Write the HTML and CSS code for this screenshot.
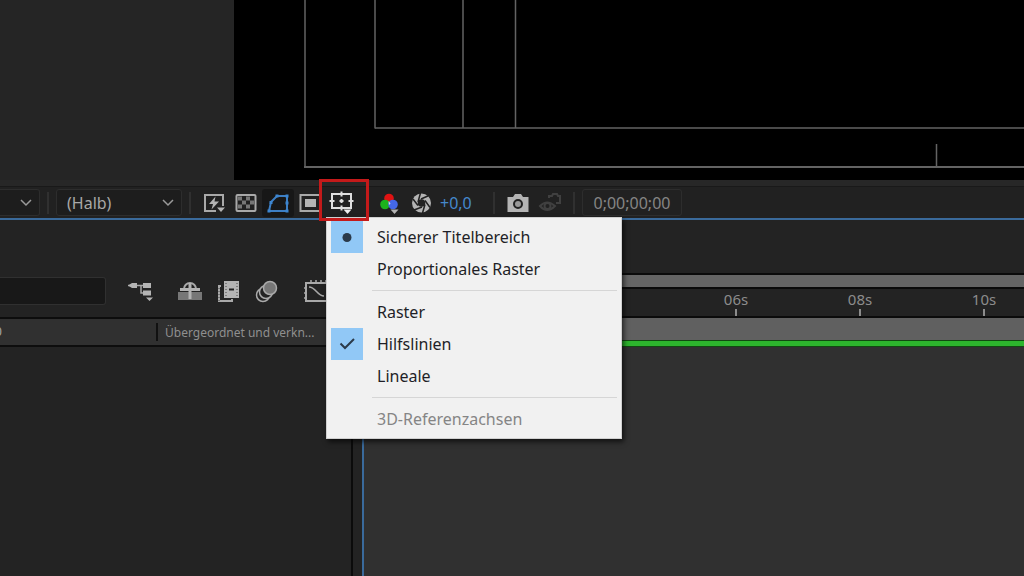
FILE: index.html
```html
<!DOCTYPE html>
<html lang="de">
<head>
<meta charset="utf-8">
<title>Komposition</title>
<link rel="stylesheet" href="styles.css">
</head>
<body>
<main class="app">
  <section class="viewer" aria-label="Kompositionsansicht">
    <div class="pasteboard"></div>
    <svg class="canvas" aria-hidden="true">
      <g class="guide">
        <path d="M71 0V167M141 0V128.500M229 0V128M281.500 0V128M702.500 144V167"/>
        <line x1="141" y1="128" x2="100%" y2="128"/>
        <line x1="70" y1="167" x2="100%" y2="167" stroke-width="2"/>
      </g>
    </svg>
  </section>

  <div class="toolbar" role="toolbar" aria-label="Ansichtsoptionen">
    <span class="select-wrap zoom"><select aria-label="Vergrößerung"><option></option></select>
      <svg class="chevron" width="12" height="8"><path d="M1 1l5 5 5-5"/></svg></span>
    <span class="sep"></span>
    <span class="select-wrap resolution"><select aria-label="Auflösung"><option>(Halb)</option></select>
      <svg class="chevron" width="12" height="8"><path d="M1 1l5 5 5-5"/></svg></span>
    <span class="sep"></span>
    <div class="group">
      <button class="tool" aria-label="Schnelle Vorschau"><svg width="24" height="24" viewBox="0 0 24 24"><path class="line" d="M14 20H3V4h18v11"/><path class="fill" d="M13.500 5.500L7 13h4l-1.500 5.500L17 10.500h-4.500zM15 16.500h8l-4 4.500z"/></svg></button>
      <button class="tool" aria-label="Transparenzraster"><svg width="24" height="24" viewBox="0 0 24 24"><rect x="2.500" y="4" width="19" height="16" rx="1" class="line"/><path class="check" d="M4 5.500h4v4H4zM12 5.500h4v4h-4zM8 9.500h4v4H8zM16 9.500h4v4h-4zM4 13.500h4v4H4zM12 13.500h4v4h-4z"/></svg></button>
      <button class="tool active" aria-label="Maske einblenden" aria-pressed="true"><svg width="24" height="24" viewBox="0 0 24 24"><path class="blue-line" d="M3 20l2-9 6-6h10v15z"/><path class="blue" d="M1.500 18.500h3v3h-3zM3.500 10h3v3h-3zM9.500 3.500h3v3h-3zM19.500 3.500h3v3h-3zM19.500 10.500h3v3h-3zM19.500 18.500h3v3h-3z"/></svg></button>
      <button class="tool" aria-label="Relevanter Bereich"><svg width="24" height="24" viewBox="0 0 24 24"><rect x="2.500" y="4" width="20" height="16" class="line"/><path class="fill" d="M7 8h11v8H7z"/></svg></button>
      <div class="menu-anchor">
        <button class="tool bright" aria-label="Raster- und Hilfslinienoptionen" aria-haspopup="menu" aria-expanded="true"><svg width="26" height="28" viewBox="0 0 26 28"><path class="line" d="M3 5h19v14H3zM12.500 2.500v5M12.500 10v4M12.500 16.500v5M.5 12h5M10.500 12h4M19.500 12h5"/><path class="fill" d="M14.500 20.500h8l-4 4.500z"/></svg></button>
        <div class="menu" role="menu">
          <button role="menuitemradio" aria-checked="true"><span class="mark on"><svg width="32" height="32"><circle cx="16" cy="16.500" r="4.500"/></svg></span>Sicherer Titelbereich</button>
          <button role="menuitemradio" aria-checked="false"><span class="mark"></span>Proportionales Raster</button>
          <hr>
          <button role="menuitemcheckbox" aria-checked="false"><span class="mark"></span>Raster</button>
          <button role="menuitemcheckbox" aria-checked="true"><span class="mark on"><svg width="32" height="32"><path d="M9.500 15.500l4.500 4.500 9-9"/></svg></span>Hilfslinien</button>
          <button role="menuitemcheckbox" aria-checked="false"><span class="mark"></span>Lineale</button>
          <hr>
          <button role="menuitemcheckbox" aria-checked="false" disabled><span class="mark"></span>3D-Referenzachsen</button>
        </div>
        <span class="highlight"></span>
      </div>
    </div>
    <div class="group channels">
      <button class="tool" aria-label="Kanäle"><svg width="24" height="24" viewBox="0 0 24 24"><circle cx="11" cy="7.500" r="4.800" fill="#e01212"/><circle cx="7" cy="13.500" r="4.800" fill="#1cb31c"/><circle cx="15" cy="13.500" r="4.800" fill="#4468e6"/><path d="M10.500 10l2 2.500-1.500 1.500z" fill="#ddd"/><path class="fill" d="M12.500 18.500h8L16.500 23z"/></svg></button>
      <button class="tool" aria-label="Belichtung zurücksetzen"><svg width="24" height="24" viewBox="0 0 24 24"><circle cx="11.500" cy="12" r="9.500" class="fill"/><circle cx="11.500" cy="12" r="3.800" fill="#212121"/><path class="blade" d="M8 11L10.500 2M11 8l8-3.500M15 9.500l5 7M15 13.500L12.500 22M12 16l-8 3M8 14.500L3 8"/></svg></button>
      <button class="exposure" aria-label="Belichtung">+0,0</button>
    </div>
    <span class="sep"></span>
    <div class="group">
      <button class="tool" aria-label="Schnappschuss"><svg width="24" height="24" viewBox="0 0 24 24"><path class="fill" d="M1.500 6H7l2-3h6l2 3h5.500v15h-21z"/><circle cx="12" cy="13" r="4" fill="#999" stroke="#212121" stroke-width="2"/></svg></button>
      <button class="tool" aria-label="Schnappschuss anzeigen" disabled><svg width="24" height="24" viewBox="0 0 24 24" fill="none" stroke="#404040" stroke-width="2"><path d="M2 15q7-7 15 0-8 8-15 0z"/><circle cx="9.500" cy="15" r="3"/><path d="M11 7V5h3l1-2h4l1 2h2v7h-4"/></svg></button>
    </div>
    <span class="sep"></span>
    <button class="timecode" aria-label="Aktuelle Zeit">0;00;00;00</button>
  </div>

  <section class="timeline" aria-label="Zeitleiste">
    <div class="layers">
      <div class="layer-tools">
        <input class="search" type="text" aria-label="Suchen">
        <button class="ltool shy-flow" aria-label="Kompositions-Miniflussdiagramm"><svg width="28" height="24" viewBox="0 0 28 24"><path class="line thin" d="M1 6.500h18M14 7v7h5"/><path class="fill" d="M1 6.500L5 4h5v5H5zM16 4h8v5h-8zM16 11.500h8v5h-8zM19 18.500h7l-3.500 3.500z"/></svg></button>
        <button class="ltool" aria-label="Ebenen ausblenden"><svg width="26" height="24" viewBox="0 0 26 24"><path d="M1 13h24v8H1z" fill="#777"/><path class="line" d="M7 10a6 6 0 0 1 12 0"/><path class="fill" d="M3 9h20v3H3zM11.500 4h3v16h-3z"/></svg></button>
        <button class="ltool" aria-label="Frame-Überblendung"><svg width="24" height="24" viewBox="0 0 24 24"><path class="line" d="M5 7H3v15h13v-2"/><path class="fill" d="M8 2h15v17H8z"/><path d="M3 9v13M10 4v14M21 4v14" stroke="#444" stroke-dasharray="1 2"/><path d="M13 10.500h5" stroke="#222" stroke-width="2"/></svg></button>
        <button class="ltool" aria-label="Bewegungsunschärfe"><svg width="24" height="24" viewBox="0 0 24 24"><g fill="#232323" stroke="#aaa" stroke-width="1.500"><circle cx="9" cy="16" r="6.500"/><circle cx="12" cy="13" r="6.500"/><circle cx="16" cy="9" r="6.500" fill="#777"/></g></svg></button>
        <button class="ltool graph" aria-label="Diagrammeditor"><svg width="28" height="24" viewBox="0 0 28 24"><path class="line" d="M3 4h24v18H3z"/><path class="line thin" d="M8 4V1M13 4V1M18 4V1M23 4V1M1 9h2M1 14h2M1 19h2M6 8c7 0 8 9 15 9"/></svg></button>
      </div>
      <div class="layer-head"><span class="col-name">0</span><span class="col-parent">Übergeordnet und verkn...</span></div>
    </div>
    <div class="gutter"></div>
    <div class="tracks">
      <div class="navigator"></div>
      <div class="ruler"><span>06s</span><span>08s</span><span>10s</span></div>
      <div class="work-area"></div>
      <div class="cache"></div>
    </div>
  </section>
</main>
</body>
</html>
```
FILE: styles.css
```css
* { box-sizing: border-box; }
body {
  margin: 0;
  background: #232323;
  color: #a8a8a8;
  font-family: "Noto Sans", "Open Sans", sans-serif;
  font-size: 16px;
}
button, select, input { font: inherit; color: inherit; border: 0; background: none; padding: 0; margin: 0; }
svg { display: block; fill: none; }
.app { display: flex; flex-direction: column; min-height: 100vh; overflow: hidden; }

.viewer { display: flex; height: 180px; }
.pasteboard { flex: 0 0 234px; background: #252525; }
.canvas { flex: 1; min-width: 0; height: 180px; background: #000; }
.guide { stroke: #636363; stroke-width: 1.5; }

.toolbar {
  display: flex;
  align-items: center;
  gap: 7px;
  height: 40px;
  padding-top: 1px;
  background: #212121;
  border-top: 6px solid #272727;
  border-bottom: 2px solid #3a6a9b;
  box-shadow: inset 0 1px #191919;
  flex: none;
}
.group { display: flex; align-items: center; }
.channels { margin-left: 9px; }
.sep { width: 2px; height: 22px; background: #303030; }
.select-wrap { position: relative; display: block; height: 27px; }
.select-wrap select {
  appearance: none;
  width: 100%;
  height: 27px;
  padding-left: 10px;
  background: #1d1d1d;
  border: 1px solid #2d2d2d;
  border-radius: 3px;
}
.zoom { width: 40px; }
.zoom select { border-left: 0; border-radius: 0 3px 3px 0; }
.resolution { width: 126px; }
.chevron { position: absolute; right: 8px; top: 10px; stroke: #9a9a9a; stroke-width: 1.5; }
.tool { display: grid; place-items: center; width: 32px; height: 28px; }
.tool.active { background: #171717; border-radius: 3px; }
.line { stroke: #a9a9a9; stroke-width: 2; }
.thin { stroke-width: 1.5; }
.fill { fill: #b4b4b4; }
.check { fill: #777; }
.blue-line { stroke: #3d7fc4; stroke-width: 2; }
.blue { fill: #3d86d0; }
.blade { stroke: #212121; stroke-width: 1.5; }
.bright .line { stroke: #dedede; }
.bright .fill { fill: #eee; }
.exposure { width: 48px; padding-left: 2px; text-align: left; color: #4588cc; }
.timecode { width: 100px; height: 27px; border: 1px solid #2d2d2d; border-radius: 3px; color: #858585; }

.menu-anchor { position: relative; }
.highlight {
  position: absolute;
  left: -7px;
  top: -10px;
  width: 50px;
  height: 42px;
  border: 3px solid #c41a1a;
  z-index: 3;
  pointer-events: none;
}
.menu {
  position: absolute;
  left: 0;
  top: 28px;
  z-index: 2;
  width: 296px;
  padding: 3px 4px;
  background: #f1f1f1;
  border: 1px solid #d0d0d0;
  box-shadow: 2px 3px 5px #000000a0;
  color: #1f1f27;
}
.menu button { display: flex; align-items: center; width: 100%; height: 32px; gap: 14px; text-align: left; white-space: nowrap; }
.menu button:disabled { color: #858585; }
.menu hr { margin: 5px 0 5px 41px; border: 0; height: 1px; background: #d6d6d6; }
.mark { width: 32px; height: 32px; }
.mark.on { background: #91c8f6; }
.mark circle { fill: #2b3a4a; }
.mark path { stroke: #2b3a4a; stroke-width: 2; }

.timeline { display: flex; flex: 1; min-height: 356px; }
.layers { flex: 0 0 352px; border-right: 1px solid #0b0b0b; }
.layer-tools { display: flex; align-items: center; height: 99px; padding-top: 45px; border-bottom: 2px solid #0d0d0d; }
.search { width: 106px; height: 28px; background: #181818; border: 1px solid #303030; border-left: 0; border-radius: 0 3px 3px 0; }
.ltool { display: grid; place-items: center; width: 38px; height: 28px; }
.shy-flow { margin-left: 11px; margin-right: 6px; width: 48px; }
.graph { margin-left: 13px; }
.layer-head { display: flex; align-items: center; height: 28px; background: #303030; border-bottom: 2px solid #0d0d0d; font-size: 12px; }
.col-name { width: 158px; height: 18px; line-height: 18px; border-right: 2px solid #111; text-indent: -5px; }
.col-parent { padding-left: 7px; white-space: nowrap; color: #8f8f8f; }
.gutter { flex: 0 0 12px; border-left: 1px solid #0b0b0b; border-right: 2px solid #3a6a9b; }
.tracks { flex: 1; min-width: 0; background: #303030; }
.navigator { height: 69px; border-top: 53px solid #232323; background: #656565; box-shadow: inset 0 2px #0b0b0b, inset 0 -2px #0b0b0b; }
.ruler { display: flex; height: 29px; padding-left: 310px; background: #232323; border-bottom: 2px solid #0b0b0b; }
.ruler span {
  flex: 0 0 124px;
  text-align: center;
  font-size: 15px;
  line-height: 20px;
  color: #8c8c8c;
  background: linear-gradient(#8c8c8c, #8c8c8c) 50% 100% / 2px 7px no-repeat;
}
.work-area { height: 22px; background: #606060; }
.cache { height: 7px; background: #2db52d; border: solid #124812; border-width: 1px 0; }
```
